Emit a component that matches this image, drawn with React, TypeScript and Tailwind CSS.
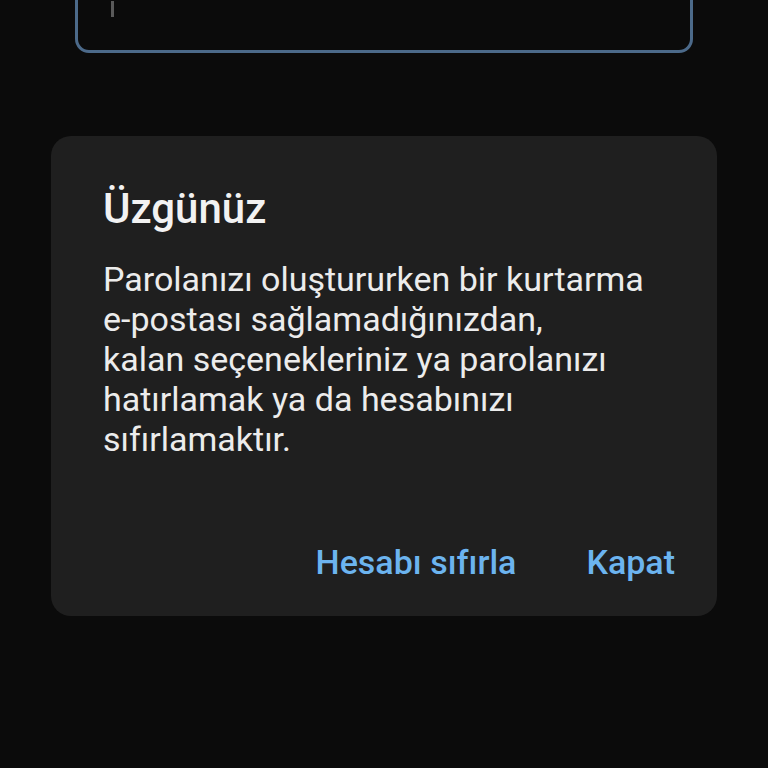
import React from "react";

const App = () => {
  return (
    <div
      className="w-[768px] h-[768px] bg-[#0b0b0b] overflow-hidden flex flex-col"
      style={{ fontFamily: "Roboto, 'Noto Sans', sans-serif" }}
    >
      <div className="px-[75px] -mt-[40px]">
        <div className="h-[93px] rounded-[14px] border-[3px] border-[#4c6a8a] pl-[33px]">
          <div className="mt-[38px] w-[3px] h-[16px] bg-[#5a5a5a]" />
        </div>
      </div>

      <div className="mx-[51px] mt-[83px] h-[480px] rounded-[20px] bg-[#1f1f1f] pl-[52px] pr-[42px] pt-[48px] flex flex-col">
        <h2 className="text-[42px] leading-[49px] font-medium text-[#f2f2f2]">Üzgünüz</h2>
        <p className="mt-[26px] text-[34px] leading-[40px] text-[#ececec]">
          Parolanızı oluştururken bir kurtarma
          <br />
          e-postası sağlamadığınızdan,
          <br />
          kalan seçenekleriniz ya parolanızı
          <br />
          hatırlamak ya da hesabınızı
          <br />
          sıfırlamaktır.
        </p>
        <div className="mt-auto mb-[34px] flex justify-end gap-[70px] text-[34px] leading-[40px] font-medium text-[#6cb4ef]">
          <button>Hesabı sıfırla</button>
          <button>Kapat</button>
        </div>
      </div>
    </div>
  );
};

export default App;
